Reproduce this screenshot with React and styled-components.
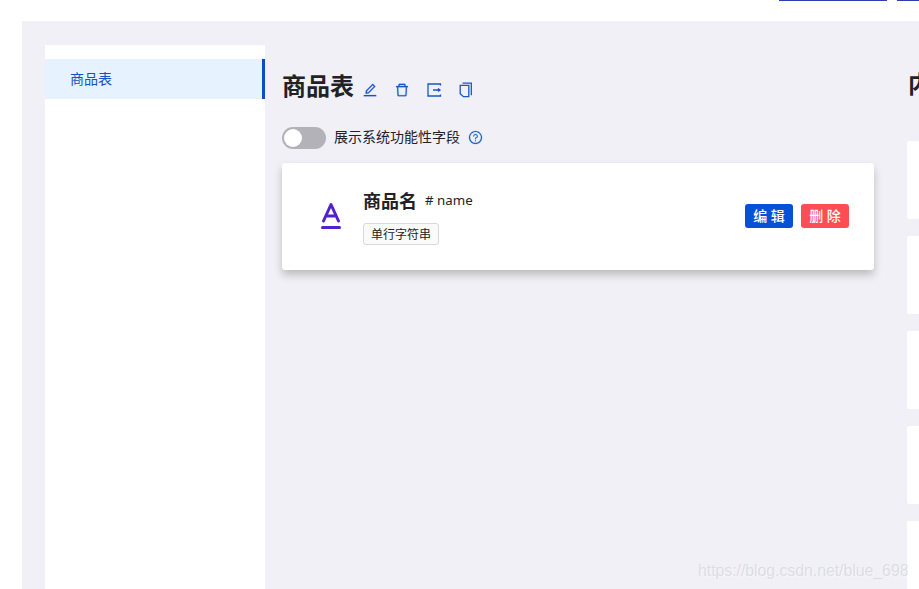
import React from "react";
import styled, { createGlobalStyle } from "styled-components";
import {
  AiOutlineEdit,
  AiOutlineDelete,
  AiOutlineQuestionCircle,
} from "react-icons/ai";

const GlobalStyle = createGlobalStyle`
  *, *::before, *::after { box-sizing: border-box; }
  body {
    margin: 0;
    overflow: hidden;
    background: #fff;
    color: #222226;
    font: 14px/22px "Noto Sans", "Noto Sans CJK SC", sans-serif;
  }
`;

const Page = styled.div`
  display: flex;
  flex-direction: column;
  width: 919px;
  height: 589px;
  overflow: hidden;
  padding-left: 22px;
`;

const Header = styled.header`
  display: flex;
  flex: none;
  justify-content: flex-end;
  gap: 10px;
  height: 21px;
`;

const HeaderButton = styled.span`
  width: ${(p) => p.$width}px;
  height: 1px;
  background: #2b3fb0;
`;

const Body = styled.main`
  display: flex;
  flex: 1;
  min-height: 0;
  padding: 24px 0 0 23px;
  background: #f0f0f6;
`;

const Sidebar = styled.nav`
  flex: none;
  width: 220px;
  padding-top: 14px;
  background: #fff;
`;

const MenuItem = styled.div`
  height: 40px;
  padding-left: 25px;
  line-height: 39px;
  color: #1450c8;
  background: #e6f3fe;
  border-right: 3px solid #0b4dc4;
`;

const Content = styled.section`
  flex: none;
  width: 592px;
  margin-left: 17px;
  padding-top: 23px;
`;

const TitleRow = styled.div`
  display: flex;
  align-items: center;
  height: 36px;
`;

const Title = styled.h1`
  margin: 0;
  font-size: 24px;
  line-height: 36px;
  font-weight: 700;
  white-space: nowrap;
`;

const Actions = styled.div`
  display: flex;
  gap: 16px;
  margin: 8px 0 0 8px;
  color: #1558c8;
  svg {
    stroke: currentColor;
    stroke-width: 14px;
  }
`;

const LineIcon = styled.svg`
  width: 16px;
  height: 16px;
  fill: none;
  && { stroke-width: 1.3px; }
`;

const ToggleRow = styled.div`
  display: flex;
  align-items: center;
  gap: 8px;
  height: 22px;
  margin-top: 23px;
  svg {
    margin-top: -2px;
    color: #1565d0;
    stroke: currentColor;
    stroke-width: 12px;
  }
`;

const ToggleLabel = styled.span`
  line-height: 20px;
  margin-top: -2px;
`;

const Switch = styled.span`
  display: flex;
  width: 44px;
  height: 22px;
  padding: 2px;
  border-radius: 11px;
  background: #b3b2b8;
  &::before {
    content: "";
    width: 18px;
    height: 18px;
    border-radius: 50%;
    background: #fff;
  }
`;

const Card = styled.article`
  display: flex;
  align-items: center;
  height: 107px;
  margin-top: 14px;
  padding: 0 25px 2px 38px;
  border-radius: 3px;
  background: #fff;
  box-shadow: 0 5px 8px rgba(0, 0, 0, 0.22);
`;

const TypeIcon = styled.svg`
  flex: none;
  width: 22px;
  height: 28px;
  fill: none;
  stroke: #5420cd;
  stroke-width: 3;
  stroke-linecap: round;
  stroke-linejoin: round;
`;

const FieldInfo = styled.div`
  flex: 1;
  margin: 4px 0 0 21px;
`;

const FieldHeading = styled.div`
  display: flex;
  align-items: center;
  gap: 8px;
  height: 22px;
`;

const FieldName = styled.h2`
  margin: 0;
  font-size: 18px;
  line-height: 26px;
`;

const FieldId = styled.span`
  margin-top: -2px;
  font-size: 13.3px;
  line-height: 22px;
`;

const FieldType = styled.span`
  display: inline-block;
  height: 22px;
  margin-top: 11px;
  padding: 0 7px;
  border: 1px solid #d9d9d9;
  border-radius: 3px;
  background: #fafafa;
  font-size: 12px;
  line-height: 21px;
  vertical-align: top;
`;

const Button = styled.button`
  width: 48px;
  height: 24px;
  margin: 0 0 0 8px;
  padding: 0;
  border: 0;
  border-radius: 3px;
  color: #fff;
  background: ${(p) => (p.$danger ? "#ff4d55" : "#0750d8")};
  font: 500 14px/24px "Noto Sans", "Noto Sans CJK SC", sans-serif;
`;

const Preview = styled.aside`
  flex: none;
  width: 140px;
  margin-left: 33px;
  padding-top: 21px;
`;

const PreviewTitle = styled(Title)`
  margin-bottom: 39px;
  padding-left: 1px;
`;

const PreviewCard = styled.div`
  height: 78px;
  margin-bottom: 17px;
  border-radius: 2px;
  background: #fff;
`;

const Watermark = styled.div`
  position: absolute;
  top: 560px;
  left: 698px;
  color: rgba(130, 130, 140, 0.2);
  font: 16px/22px "Liberation Sans", sans-serif;
  letter-spacing: -0.1px;
  white-space: nowrap;
  text-shadow: 1px 1px 0 rgba(255, 255, 255, 0.4);
`;

export default function App() {
  return (
    <>
      <GlobalStyle />
      <Page>
        <Header>
          <HeaderButton $width={108} />
          <HeaderButton $width={22} />
        </Header>
        <Body>
          <Sidebar>
            <MenuItem>商品表</MenuItem>
          </Sidebar>
          <Content>
            <TitleRow>
              <Title>商品表</Title>
              <Actions>
                <AiOutlineEdit size={16} />
                <AiOutlineDelete size={16} />
                <LineIcon viewBox="0 0 16 16">
                  <path d="M14.5 3.6V2H2v12h12.5v-1.6M7 8h7M12 6.4 14 8l-2 1.6" />
                </LineIcon>
                <LineIcon viewBox="0 0 16 16">
                  <path d="M4.5 1.2h8.8v12M2.2 3.4h8.6v11.2H5.4L2.2 11.6z" />
                </LineIcon>
              </Actions>
            </TitleRow>
            <ToggleRow>
              <Switch />
              <ToggleLabel>展示系统功能性字段</ToggleLabel>
              <AiOutlineQuestionCircle size={15} />
            </ToggleRow>
            <Card>
              <TypeIcon viewBox="0 0 22 28">
                <path d="M3.5 19 11 2.5 18.5 19M6 14h10M2.5 25.5h17" />
              </TypeIcon>
              <FieldInfo>
                <FieldHeading>
                  <FieldName>商品名</FieldName>
                  <FieldId># name</FieldId>
                </FieldHeading>
                <FieldType>单行字符串</FieldType>
              </FieldInfo>
              <Button>编 辑</Button>
              <Button $danger>删 除</Button>
            </Card>
          </Content>
          <Preview>
            <PreviewTitle>内</PreviewTitle>
            {[0, 1, 2, 3, 4].map((n) => (
              <PreviewCard key={n} />
            ))}
          </Preview>
        </Body>
      </Page>
      <Watermark>https://blog.csdn.net/blue_698</Watermark>
    </>
  );
}
